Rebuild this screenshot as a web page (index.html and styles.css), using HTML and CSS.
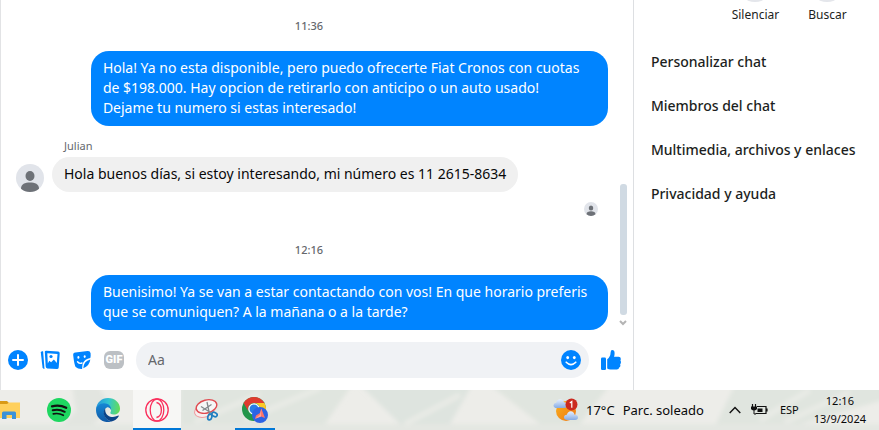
FILE: index.html
```html
<!DOCTYPE html>
<html lang="es">
<head>
<meta charset="utf-8">
<title>Chat</title>
<link rel="stylesheet" href="styles.css">
</head>
<body>
<svg class="defs" width="0" height="0">
<symbol id="person" viewBox="0 0 28 28">
<circle cx="14" cy="14" r="14" fill="#e1e4ea"/>
<ellipse cx="14" cy="12" rx="4.5" ry="5" fill="#6d7177"/>
<path d="M5 24.700C5 20 9 18.500 14 18.500s9 1.500 9 6.200A14 14 0 0 1 5 24.700z" fill="#6d7177"/>
</symbol>
</svg>

<div class="app">
<main class="chat">
<div class="chat-view">
<div class="messages">
<time class="stamp">11:36</time>
<div class="bubble sent">Hola! Ya no esta disponible, pero puedo ofrecerte Fiat Cronos con cuotas de $198.000. Hay opcion de retirarlo con anticipo o un auto usado!<br>Dejame tu numero si estas interesado!</div>
<div class="sender">Julian</div>
<div class="incoming">
<svg class="avatar"><use href="#person"/></svg>
<div class="bubble received">Hola buenos días, si estoy interesando, mi número es 11 2615-8634</div>
</div>
<svg class="seen"><use href="#person"/></svg>
<time class="stamp">12:16</time>
<div class="bubble sent">Buenisimo! Ya se van a estar contactando con vos! En que horario preferis que se comuniquen? A la mañana o a la tarde?</div>
</div>
<div class="scrollbar">
<div class="thumb"></div>
<svg width="8" height="6" viewBox="0 0 8 6"><path d="M1 1l3 3 3-3" fill="none" stroke="#b4b4b4" stroke-width="2"/></svg>
</div>
</div>

<form class="composer">
<button type="button" class="tool" aria-label="Más">
<svg width="20" height="20" viewBox="0 0 20 20"><circle cx="10" cy="10" r="10" fill="#0084ff"/><path d="M10 5v10M5 10h10" stroke="#fff" stroke-width="2" stroke-linecap="round"/></svg>
</button>
<button type="button" class="tool" aria-label="Fotos">
<svg width="20" height="20" viewBox="0 0 20 20"><path d="M.8 2.500q0-1 1.300-1.300l1 .1L4.500 19q-1.700-.2-2-1.800z" fill="#0084ff"/><path d="M4.800 1.500q.2-.9 1.500-.8l11.800.9q1.700.2 1.600 1.800l-1 14q-.2 1.700-1.900 1.600l-9.500-.6q-1.500-.2-1.600-1.800z" fill="#0084ff"/><path d="M7.300 3.200l10.200.7-.7 9-2.900-3.300-2.800 2.700-1.800-1.500-1.500 2.700z" fill="#fff"/><circle cx="11" cy="6.500" r="1.600" fill="#0084ff"/></svg>
</button>
<button type="button" class="tool" aria-label="Stickers">
<svg width="20" height="20" viewBox="0 0 20 20"><path d="M1.200 5.200q-.3-2.500 2.200-2.800L15.600 1q2.600-.2 3 2.300.3 3-.3 4.600-5.600 1.300-7.200 4.800-1.100 2.400-1 6.200-4.300.2-6.400-2-1.400-1.700-2.500-11.700z" fill="#0084ff"/><path d="M18.300 9.500q-.7 6.200-7 8.800.2-7 7-8.800z" fill="#0084ff"/><ellipse cx="6.400" cy="7.400" rx="1" ry="1.400" fill="#fff"/><ellipse cx="12.700" cy="6.600" rx="1" ry="1.400" fill="#fff"/><path d="M5.500 11.700q2 2.500 4.500 1.300" fill="none" stroke="#fff" stroke-width="1.400" stroke-linecap="round"/></svg>
</button>
<button type="button" class="tool gif" aria-label="GIF"><span>GIF</span></button>
<div class="field">
<input type="text" placeholder="Aa" aria-label="Mensaje">
<button type="button" aria-label="Emoji">
<svg width="20" height="20" viewBox="0 0 20 20"><circle cx="10" cy="10" r="10" fill="#0084ff"/><ellipse cx="6.700" cy="7.600" rx="1.400" ry="1.700" fill="#fff"/><ellipse cx="13.300" cy="7.600" rx="1.400" ry="1.700" fill="#fff"/><path d="M5.200 12.200q4.800 4.800 9.600 0" fill="none" stroke="#fff" stroke-width="1.600" stroke-linecap="round"/></svg>
</button>
</div>
<button type="button" class="tool like" aria-label="Me gusta">
<svg width="20" height="20" viewBox="0 0 20 20"><rect y="7.500" width="5" height="12.500" rx="1.200" fill="#0084ff"/><path d="M6.200 9.200q3.300-2.500 3.400-6.800Q9.700 0 11.200 0q2.400 0 2.400 3.200 0 2-.6 3.600h4.600q2.200 0 2.200 1.900 0 1.300-.4 1.900.8.800.5 2.200-.2 1-.8 1.500.5 1 .1 2.100-.4.900-1.100 1.200 0 2-2.400 2H9.500q-2 0-3.300-1z" fill="#0084ff"/></svg>
</button>
</form>
</main>

<aside class="details">
<div class="actions">
<button type="button"><span class="round"></span>Silenciar</button>
<button type="button"><span class="round"></span>Buscar</button>
</div>
<button type="button" class="row">Personalizar chat</button>
<button type="button" class="row">Miembros del chat</button>
<button type="button" class="row">Multimedia, archivos y enlaces</button>
<button type="button" class="row">Privacidad y ayuda</button>
</aside>
</div>

<footer class="taskbar">
<svg class="wallpaper" viewBox="0 0 879 40" preserveAspectRatio="xMinYMin slice">
<defs>
<filter id="soft"><feGaussianBlur stdDeviation="2"/></filter>
</defs>
<g filter="url(#soft)">
<path d="M-10 34H890V50H-10z" fill="#e4e7e2"/>
<path d="M72-5h26l14 24-20 16H62l14-14z" fill="#e2e5e0"/>
<path d="M180-5H352L325 34H180z" fill="#e0e5df"/>
<path d="M360-5H472L450 34H400z" fill="#dee4df"/>
<path d="M490-5H610L580 34H540z" fill="#e0e5df"/>
<path d="M735-5H890V8L800 34H716z" fill="#e0e5df"/>
<path d="M245 30L320-2M195 32L260 4M405 34L460 5M760 30L810 0M785 32L850 2" stroke="#e9ebe6" stroke-width="5"/>
</g>
</svg>
<button type="button" class="task cut" aria-label="Explorador">
<svg width="24" height="24" viewBox="0 0 24 24"><path d="M0 3h11l2 2v14H0z" fill="#d99a16"/><path d="M0 6h11l2-1.500h11V20H0z" fill="#ffd05c"/><path d="M6 21v-6q0-1.500 1.500-1.500h11Q20 13.500 20 15v6h-4v-4h-5.500v4z" fill="#3b92d8"/></svg>
</button>
<button type="button" class="task" aria-label="Spotify">
<svg width="24" height="24" viewBox="0 0 24 24"><circle cx="12" cy="12" r="12" fill="#1ed760"/><g fill="none" stroke="#111" stroke-linecap="round"><path d="M5 8.300q7.500-2 14.200 1.500" stroke-width="2.300"/><path d="M5.700 12.200q6.500-1.600 12 1.600" stroke-width="2"/><path d="M6.300 15.900q5.500-1.200 10 1.400" stroke-width="1.700"/></g></svg>
</button>
<button type="button" class="task" aria-label="Edge">
<svg width="24" height="24" viewBox="0 0 24 24">
<defs>
<linearGradient id="edge-top" x1="0" y1=".4" x2="1" y2=".5"><stop offset="0" stop-color="#2494dc"/><stop offset=".5" stop-color="#32c5d0"/><stop offset="1" stop-color="#65dc55"/></linearGradient>
<linearGradient id="edge-side" x1="0" y1="0" x2="0" y2="1"><stop offset="0" stop-color="#1687d5"/><stop offset="1" stop-color="#1059a6"/></linearGradient>
</defs>
<path d="M0 11.500C.5 4.500 5.700 0 12 0c7 0 12 5 12 10.500 0 4-3 6-6.200 6-3 0-4-1.400-3.300-2.300 1.300-1.700.5-6.200-4.800-6.200C5 8 1.300 9 0 11.500z" fill="url(#edge-top)"/>
<path d="M0 12c.2-4 4-6.800 8-6.800 4.800 0 7.500 3.300 7 6.800-.8-2-2.300-3-4.100-2.600-2.700 1-3.800 4.600-2.400 8.100 1.200 3.200 4 5.500 7 6C7 26 0 20 0 12z" fill="url(#edge-side)"/>
<path d="M9.300 10.300C5.900 14 8 22 15.500 23.500c3.100-.7 5.500-2.500 7.100-5 .4-.8-.1-1.100-.8-.7-5.300 2.600-11.500.7-12.500-4.600-.2-1.100-.2-2 0-2.900z" fill="#0c4488"/>
</svg>
</button>
<button type="button" class="task active" aria-label="Opera">
<svg width="24" height="24" viewBox="0 0 24 24" fill="none" stroke="#fa2f5c" stroke-width="1.300"><circle cx="12" cy="12" r="11.200"/><ellipse cx="12" cy="12" rx="6.800" ry="11"/><path d="M11.500 4.500C18 6 18 18 11.500 19.500"/></svg>
</button>
<button type="button" class="task" aria-label="Recortes">
<svg width="24" height="24" viewBox="0 0 24 24" fill="none"><ellipse cx="10.500" cy="12.500" rx="10.200" ry="6.500" transform="rotate(-18 10.500 12.500)" fill="#f6eeee" stroke="#f09a9d"/><ellipse cx="12.500" cy="8.500" rx="10.500" ry="6.500" transform="rotate(-15 12.500 8.500)" fill="#f5f6f6" stroke="#e04a50" stroke-width="1.400"/><path d="M13 4l2.500 12M7 8.500l11 7M8.500 12.500l9-6" stroke="#84898c" stroke-width="1.300"/><g stroke="#207fc1" stroke-width="1.700"><ellipse cx="15.800" cy="19" rx="2" ry="3" transform="rotate(15 15.800 19)"/><ellipse cx="20.500" cy="16.500" rx="2.800" ry="2" transform="rotate(25 20.500 16.500)"/></g></svg>
</button>
<button type="button" class="task open" aria-label="Chrome">
<svg width="26" height="26" viewBox="0 0 26 26"><circle cx="12" cy="12" r="12" fill="#22964a"/><path d="M1.600 6A12 12 0 0 1 22.400 6H12a6 6 0 0 0-5.200 9z" fill="#df3b2f"/><path d="M22.400 6A12 12 0 0 1 12 24l5.200-9A6 6 0 0 0 12 6z" fill="#fcc826"/><circle cx="12" cy="12" r="5.800" fill="#fff"/><circle cx="12" cy="12" r="4.500" fill="#287de6"/><circle cx="18" cy="18" r="8" fill="#2d63e4"/><path d="M19.300 11.500l3.700 9.500-4-1.500-6 2.200 1-3.200 4-2.500z" fill="#ff7468"/><path d="M19.300 11.500l-.3 8-6 2.200 5-4z" fill="#ffa49a"/></svg>
</button>

<div class="tray">
<button type="button" class="weather">
<svg width="25" height="24" viewBox="0 0 25 24">
<defs><linearGradient id="sun" x1="0" y1="0" x2="1" y2="1"><stop offset="0" stop-color="#f9b01c"/><stop offset="1" stop-color="#ef7715"/></linearGradient>
<linearGradient id="cloud" x1="0" y1="0" x2="0" y2="1"><stop offset="0" stop-color="#e5efff"/><stop offset="1" stop-color="#86abe3"/></linearGradient></defs>
<circle cx="13" cy="13" r="10" fill="url(#sun)"/>
<path d="M4 10q-3.500 0-3.500-2.800Q.6 5 3.300 4.700 4 1.500 7 1.300q3 0 4 3 3-.2 3 2.700 0 3-3 3z" fill="url(#cloud)"/>
<path d="M14.500 22q-3.500 0-3.500-2.700 0-2.300 2.800-2.500 1-3.500 4-3.500 3 .2 3.800 3.400 3.400-.1 3.400 2.600 0 2.700-3 2.700z" fill="url(#cloud)"/>
<circle cx="18.500" cy="6.500" r="6" fill="#cb2a20"/><path d="M16.800 5l2-1.500v6.300" fill="none" stroke="#fff" stroke-width="1.200"/>
</svg>
<span>17°C</span><span>Parc. soleado</span>
</button>
<button type="button" class="more" aria-label="Mostrar iconos ocultos"><svg width="12" height="8" viewBox="0 0 12 8"><path d="M.7 7L6 1.500 11.300 7" fill="none" stroke="#111" stroke-width="1.400"/></svg></button>
<button type="button" class="battery" aria-label="Batería">
<svg width="17" height="12" viewBox="0 0 17 12"><path d="M1.500 0v3M4.500 0v3M6 2.500h9v7H4.500M16 4.500v3" fill="none" stroke="#111" stroke-width="1.200"/><path d="M0 2.500h6v2.300Q5.800 6.500 3 6.500T0 4.800z" fill="#111"/><path d="M3 6v4h2" fill="none" stroke="#111"/><path d="M6.500 4.500h5v3.500h-5z" fill="#111"/></svg>
</button>
<button type="button" class="lang">ESP</button>
<button type="button" class="clock"><time>12:16</time><time>13/9/2024</time></button>
</div>
</footer>
</body>
</html>
```

FILE: styles.css
```css
* {
	box-sizing: border-box;
}

body {
	background-color: #fff;
	color: #080809;
	display: flex;
	flex-direction: column;
	font-family: "Noto Sans", "Open Sans", sans-serif;
	font-size: 14px;
	height: 100vh;
	line-height: 20px;
	margin: 0;
}

button {
	background: none;
	border: none;
	color: inherit;
	cursor: pointer;
	font: inherit;
	padding: 0;
}

svg {
	display: block;
	flex: none;
}

.defs {
	position: absolute;
}

.app {
	display: flex;
	flex: 1;
	min-height: 0;
	overflow: hidden;
}

/* conversation */
.chat {
	border-left: 1px solid #e2e3e5;
	display: flex;
	flex: 1;
	flex-direction: column;
	min-width: 0;
}

.chat-view {
	display: flex;
	flex: 1;
	min-height: 0;
}

.messages {
	display: flex;
	flex: 1;
	flex-direction: column;
	justify-content: flex-end;
	padding: 0 10px 0 9px;
}

.stamp {
	align-self: center;
	color: #65686c;
	font-size: 11px;
	font-weight: 500;
	line-height: 16px;
	margin-bottom: 17px;
}

.bubble {
	border-radius: 18px;
	padding: 7px 12px 8px;
}

.sent {
	align-self: flex-end;
	background-color: #0084ff;
	color: #fff;
	max-width: 517px;
}

.received {
	background-color: #f0f0f0;
}

.sender {
	color: #65686c;
	font-size: 11px;
	line-height: 14px;
	margin: 13px 0 4px 54px;
}

.incoming {
	align-items: flex-end;
	display: flex;
	gap: 8px;
	margin-left: 6px;
}

.avatar {
	height: 28px;
	width: 28px;
}

.seen {
	align-self: flex-end;
	height: 14px;
	margin: 10px 10px 26px;
	width: 14px;
}

.scrollbar {
	align-items: center;
	display: flex;
	flex-direction: column;
	gap: 5px;
	justify-content: flex-end;
	margin-right: 4px;
	padding-bottom: 4px;
	width: 11px;
}

.thumb {
	background-color: #d0dae3;
	border-radius: 3px;
	height: 131px;
	width: 7px;
}

.composer {
	align-items: center;
	display: flex;
	gap: 12px;
	padding: 12px 12px 12px 7px;
}

.gif {
	background-color: #bcc0c4;
	border-radius: 6px;
	color: #fff;
	font-family: Roboto, sans-serif;
	font-size: 11px;
	font-weight: 900;
	height: 18px;
	line-height: 18px;
	width: 20px;
}

.field {
	align-items: center;
	background-color: #f0f2f5;
	border-radius: 18px;
	display: flex;
	flex: 1;
	height: 36px;
	padding: 0 8px 0 12px;
}

.field input {
	background: none;
	border: none;
	color: inherit;
	flex: 1;
	font: inherit;
	min-width: 0;
	outline: none;
	padding: 0;
}

.field input::placeholder {
	color: #65686c;
	opacity: 1;
}

/* right column */
.details {
	border-left: 1px solid #dddfe2;
	display: flex;
	flex: none;
	flex-direction: column;
	width: 28%;
}

.actions {
	display: flex;
	justify-content: center;
	margin: -34px 0 17px;
	padding-left: 70px;
}

.actions button {
	align-items: center;
	color: #1c1e21;
	display: flex;
	flex-direction: column;
	font-size: 12px;
	gap: 5px;
	line-height: 16px;
	width: 72px;
}

.round {
	background-color: #e4e6eb;
	border-radius: 50%;
	height: 36px;
	width: 36px;
}

.row {
	color: #1c1e21;
	font-weight: 500;
	line-height: 20px;
	padding: 12px 17px;
	text-align: left;
	white-space: nowrap;
}

/* taskbar */
.taskbar {
	background-color: #edede9;
	display: flex;
	flex: none;
	font-size: 11px;
	gap: 1px;
	height: 40px;
	isolation: isolate;
	overflow: hidden;
	position: relative;
}

.wallpaper {
	height: 100%;
	inset: 0;
	position: absolute;
	width: 100%;
	z-index: -1;
}

.task {
	align-items: center;
	border-bottom: 2px solid transparent;
	border-top: 2px solid transparent;
	display: flex;
	justify-content: center;
	width: 48px;
}

.cut {
	justify-content: flex-end;
	padding-right: 14px;
	width: 34px;
}

.active {
	background-color: #f7f7f5;
	border-bottom-color: #0078d7;
}

.open {
	background: linear-gradient(#0078d7, #0078d7) center bottom / 40px 2px no-repeat border-box;
}

.tray {
	display: flex;
	margin-left: auto;
	padding-right: 13px;
}

.tray button {
	align-items: center;
	display: flex;
}

.weather {
	font-size: 13px;
	gap: 8px;
	margin-right: 25px;
}

.more {
	margin-right: 10px;
}

.battery {
	margin-right: 12px;
}

.lang {
	margin-right: 15px;
}

.tray .clock {
	flex-direction: column;
	justify-content: center;
	line-height: 18px;
}
```
